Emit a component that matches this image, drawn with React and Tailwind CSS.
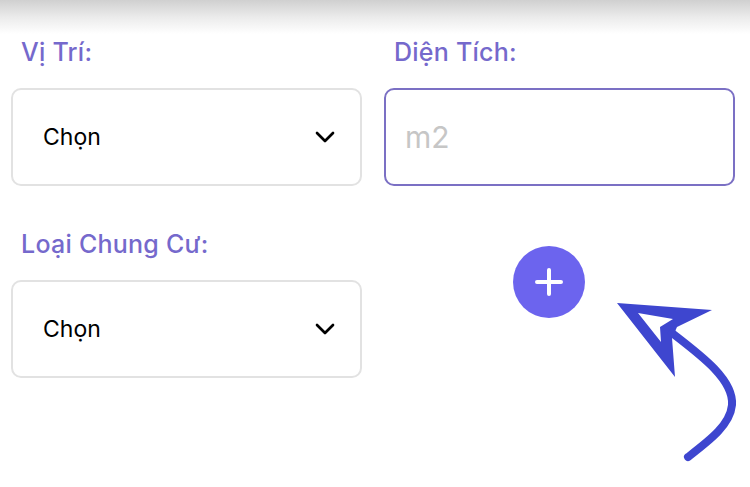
import { ChevronDown } from 'lucide-react'

const font = { fontFamily: 'Inter, "Noto Sans", sans-serif' }

// fake select box, just shows the placeholder
function SelectBox({ value }) {
  return (
    <div className="h-[98px] rounded-[10px] border-2 border-[#e2e2e2] bg-white flex items-center justify-between pl-[30px] pr-[19px]">
      <span className="text-[23px] text-black">{value}</span>
      <ChevronDown size={32} strokeWidth={2} className="text-black" />
    </div>
  )
}

function Label({ children }) {
  return <div className="pl-[10px] h-[30px] leading-[30px] text-[25px] tracking-[0.01em] font-medium text-[#7569cc] mb-[21px]">{children}</div>
}

export default function App() {
  return (
    <div className="relative w-[750px] h-[487px] overflow-hidden bg-white" style={font}>
      {/* shadow from the header above */}
      <div className="h-[34px] bg-linear-to-b from-[#d0d0d0] via-[#ebebeb] to-white" />

      <div className="grid grid-cols-2 gap-x-[22px] pl-[11px] pr-[15px] pt-[3px]">
        <div>
          <Label>Vị Trí:</Label>
          <SelectBox value="Chọn" />
        </div>
        <div>
          <Label>Diện Tích:</Label>
          <div className="h-[98px] rounded-[10px] border-2 border-[#7b70c4] bg-white flex items-center pl-[19px]">
            <input
              placeholder="m2"
              className="w-full outline-none text-[30px] text-black placeholder:text-[#c6c6c6] bg-transparent"
            />
          </div>
        </div>

        <div className="mt-[43px]">
          <Label>Loại Chung Cư:</Label>
          <SelectBox value="Chọn" />
        </div>
        <div className="mt-[60px] pl-[129px]">
          <button className="w-[72px] h-[72px] rounded-full bg-[#6c64ee] flex items-center justify-center">
            <svg width="36" height="36" viewBox="0 0 36 36" fill="none" stroke="white" strokeWidth="4" strokeLinecap="round">
              <path d="M18 6v24M6 18h24" />
            </svg>
          </button>
        </div>
      </div>

      {/* hand-drawn annotation arrow */}
      <svg className="absolute left-0 top-0 pointer-events-none" width="750" height="487" viewBox="0 0 750 487" fill="none">
        <path
          d="M617 303 L712 310 L677 327 L672 338 L675 377 Z M638 313 L661 342 L660 327 L673 319 Z"
          fill="#3e46cf"
          fillRule="evenodd"
        />
        <path
          d="M672 333 C 702 356, 734 380, 732 405 C 730 425, 710 440, 688 457"
          stroke="#3e46cf"
          strokeWidth="8"
          strokeLinecap="round"
        />
      </svg>
    </div>
  )
}
